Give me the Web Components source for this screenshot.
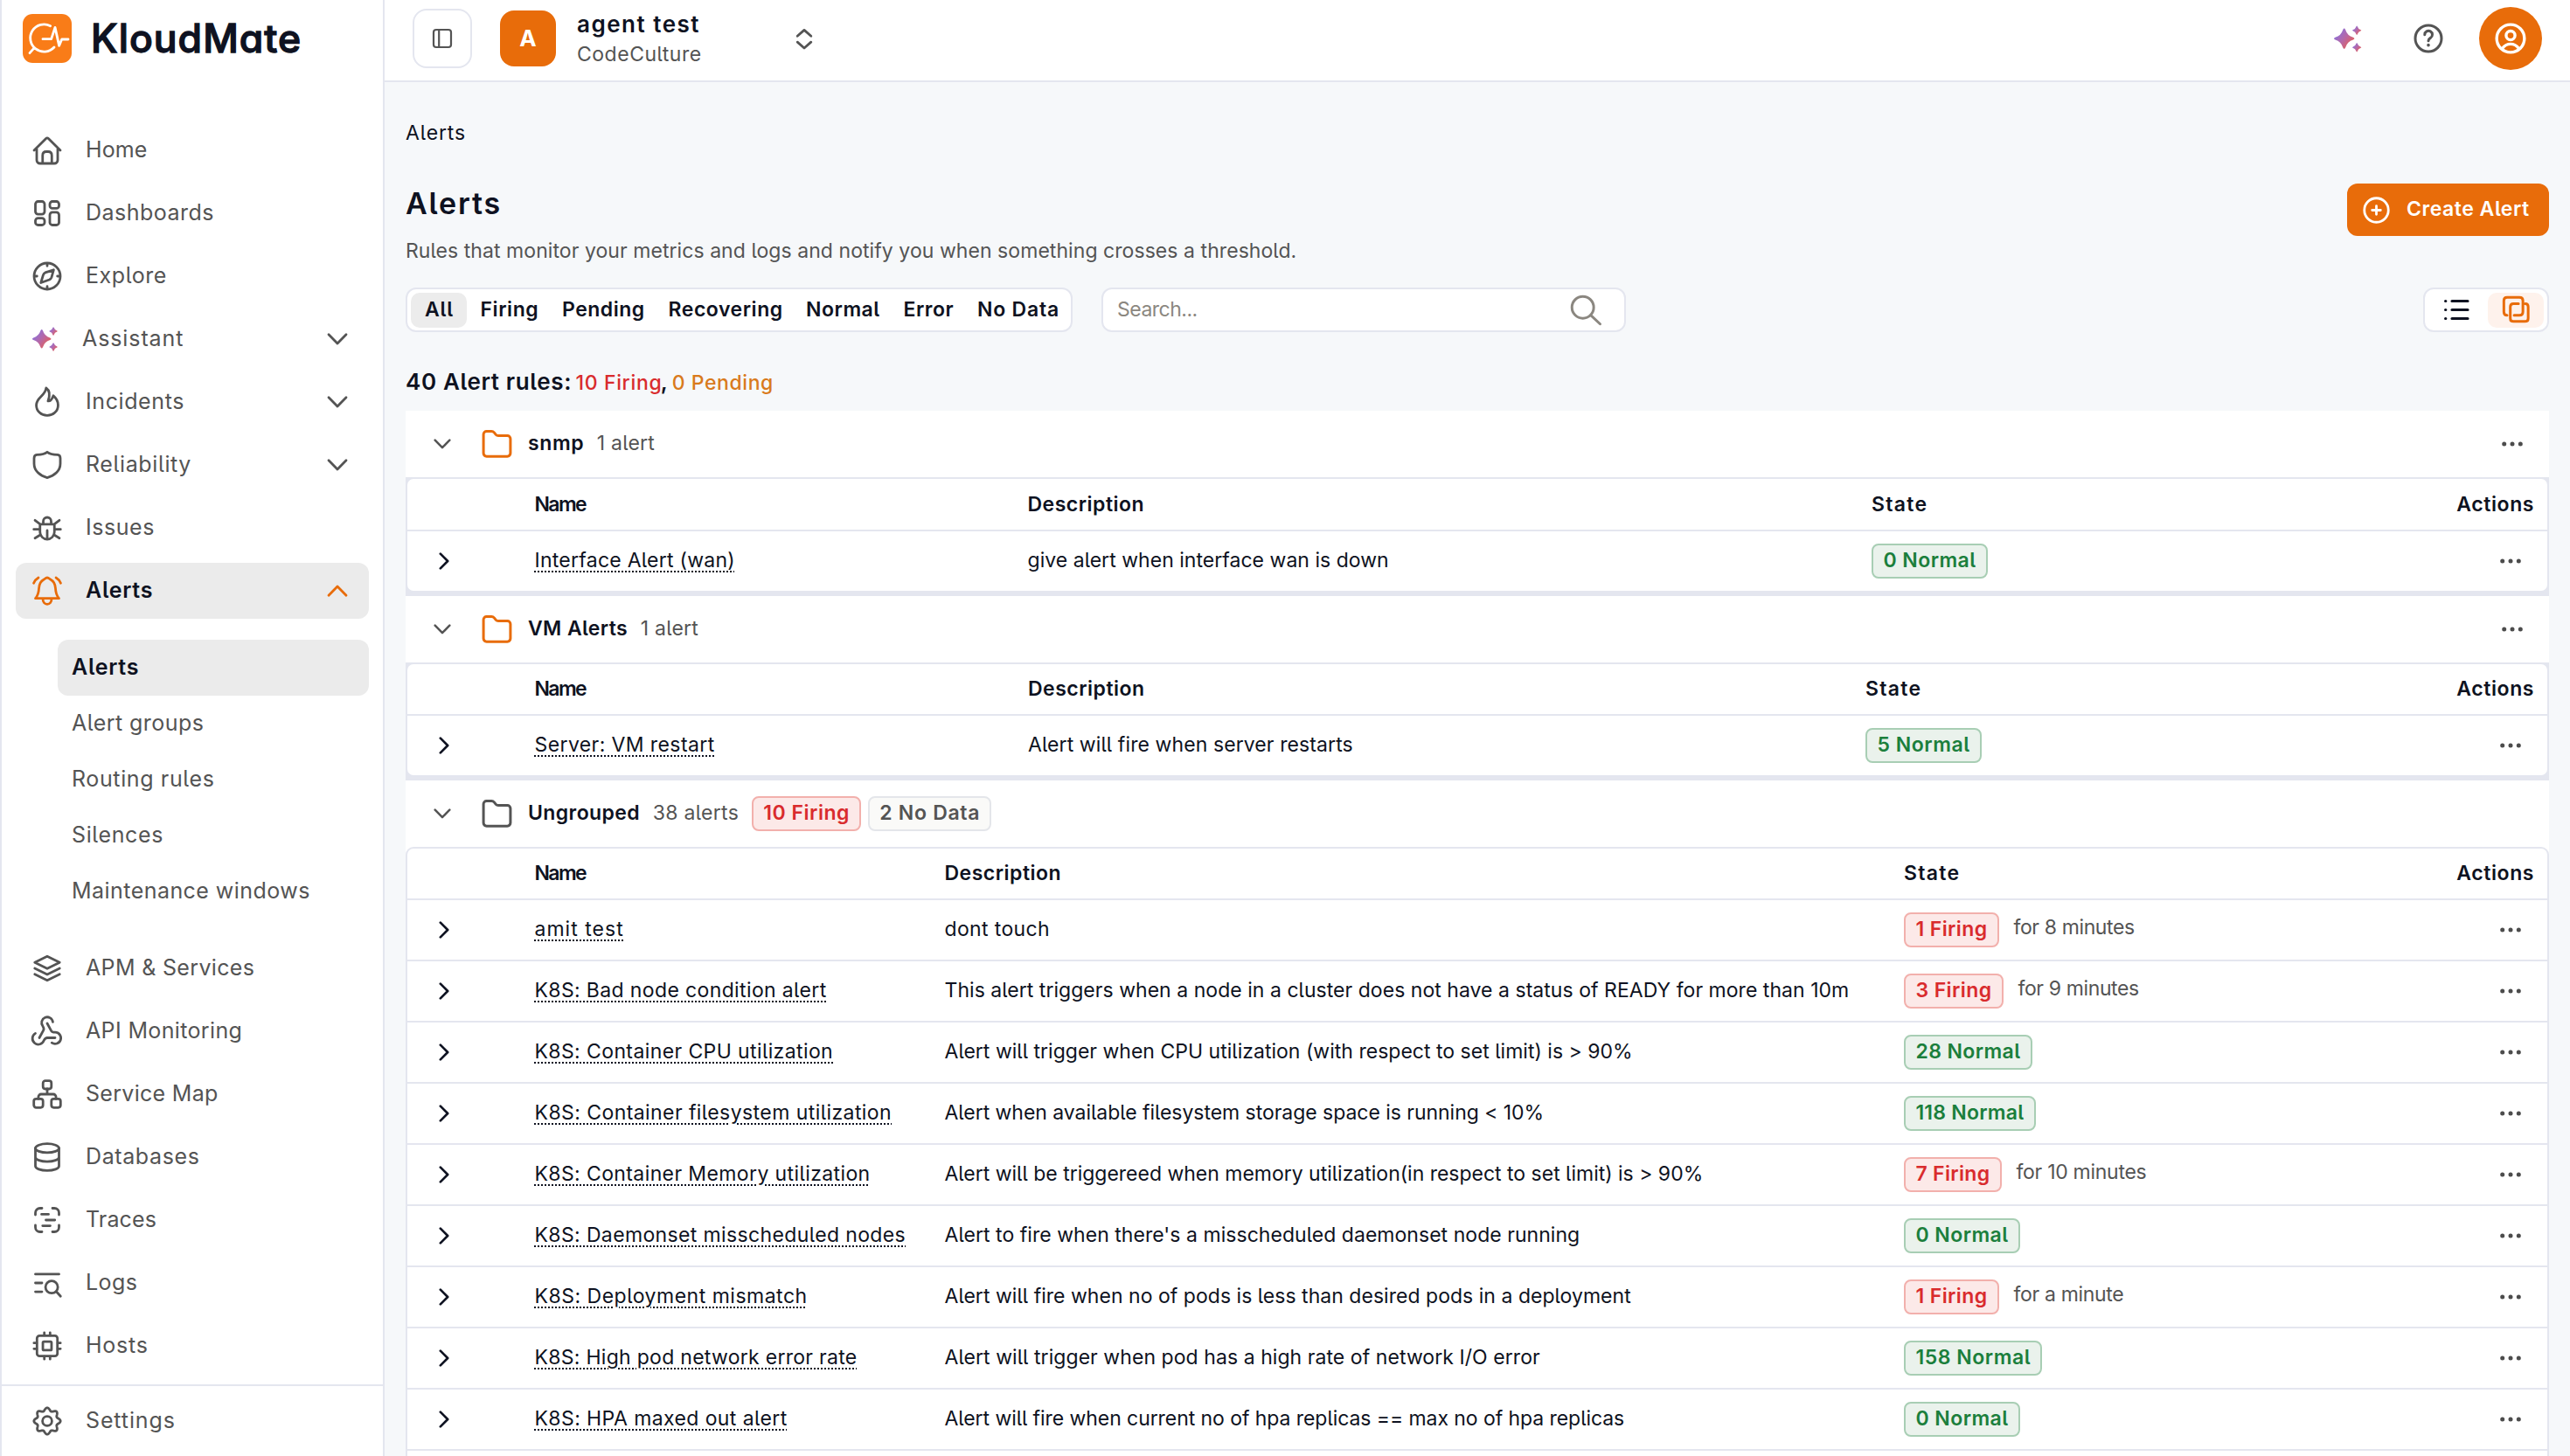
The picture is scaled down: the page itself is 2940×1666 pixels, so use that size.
<!DOCTYPE html>
<html lang="en">
<head>
<meta charset="utf-8">
<title>KloudMate – Alerts</title>
<style>
:root{--ink:#0e1221;--grey:#545454;--line:#e4e6ef;--orange:#e86c0a;--canvas:#f6f8fa;--red:#d92b2d;--green:#1b7f3c}
html,body{margin:0;height:1666px;overflow:hidden;background:var(--canvas)}
body{font-family:Inter,"Liberation Sans",sans-serif;font-feature-settings:"cv05" 1;color:var(--ink);font-size:23px;line-height:1.2;-webkit-font-smoothing:antialiased}
</style>
</head>
<body>
<km-app></km-app>
<script>
const gear = (() => {
  let d = '';
  for (let i = 0; i < 96; i++) {
    const a = i / 96 * Math.PI * 2, c = Math.cos(a * 8);
    const r = 9 + 1.15 * c;
    d += (i ? 'L' : 'M') + (12 + r * Math.sin(a)).toFixed(2) + ' ' + (12 - r * Math.cos(a)).toFixed(2);
  }
  return d + 'Z';
})();
const star = (x, y, r, id) => {
  const k = r * .3, m = r * .12;
  return `<path fill="url(#${id})" stroke="none" d="M${x - m} ${y - r + m}Q${x} ${y - r - m} ${x + m} ${y - r + m}Q${x + k} ${y - k} ${x + r - m} ${y - m}Q${x + r + m} ${y} ${x + r - m} ${y + m}Q${x + k} ${y + k} ${x + m} ${y + r - m}Q${x} ${y + r + m} ${x - m} ${y + r - m}Q${x - k} ${y + k} ${x - r + m} ${y + m}Q${x - r - m} ${y} ${x - r + m} ${y - m}Q${x - k} ${y - k} ${x - m} ${y - r + m}Z"/>`;
};
const ICONS = {
  home: '<path d="M2 12 10.9 3.1a1.6 1.6 0 0 1 2.2 0L22 12M4 11v8.5A2.5 2.5 0 0 0 6.500 22h11a2.500 2.500 0 0 0 2.500-2.500V11M8.500 22v-6c0-2 1-3 2.800-3h1.400c1.800 0 2.800 1 2.800 3v6"/>',
  dashboards: '<rect x="3" y="3" width="7" height="9.700" rx="2"/><rect x="14" y="3" width="7" height="5.300" rx="2"/><rect x="3" y="15.700" width="7" height="5.300" rx="2"/><rect x="14" y="11.300" width="7" height="9.700" rx="2"/>',
  explore: '<circle cx="12" cy="12" r="10"/><path d="M12 2.500v1.700M12 19.800v1.700M2.500 12h1.700M19.800 12h1.700M16.900 7.200 15.300 12.900Q14.900 14.100 13.700 14.700L7.200 17 8.900 11.200Q9.300 9.900 10.500 9.300Z"/>',
  assistant: '<defs><linearGradient id="g" x1="0.1" y1="0.2" x2="0.9" y2="0.85"><stop offset="0" stop-color="#8a72dc"/><stop offset=".5" stop-color="#b868a4"/><stop offset="1" stop-color="#e85f50"/></linearGradient></defs>' + star(7.8, 11.8, 7.2, 'g') + star(16.7, 6, 3.2, 'g') + star(16.7, 18, 3.2, 'g'),
  incidents: '<path d="M11.200 1.200C14.500 3.500 14 7.500 12.600 11.300 14.800 11.500 15.900 9.400 16.700 7.200 19.400 9.400 20.300 11.800 20.300 14.300 20.300 19 16.600 22.300 12 22.300S3.700 19 3.700 14.300C3.700 8.300 10.500 7.500 11.200 1.200Z"/>',
  reliability: '<path d="M12 2.200C10 4 6.600 4.200 4 4.300 2.400 4.400 2 5.200 2 7v4c0 5.500 4.500 9.300 10 10.700 5.500-1.400 10-5.200 10-10.700V7c0-1.800-.4-2.600-2-2.700C17.400 4.200 14 4 12 2.200Z"/>',
  issues: '<path d="M9 8.800V7a3 3 0 0 1 6 0v1.800M6.500 9.300h11v5.900a5.500 5.500 0 0 1-11 0ZM12 14v6.600M1.800 13.100h4.500M17.700 13.100h4.500M2.700 6.200 6.700 9.200M21.300 6.200 17.300 9.200M2.700 19.800 7 17.200M21.300 19.800 17 17.200"/>',
  bell: '<path d="M12 2c-1.300 0-1.700 1-2.700 1.500C6.500 5 5.900 7 5.700 10c-.2 3.600-.5 5.500-2.700 7.800h18c-2.200-2.300-2.500-4.200-2.700-7.800-.2-3-.8-5-3.600-6.500C13.700 3 13.300 2 12 2ZM8.700 18.300c0 2.300 1.300 3.900 3.300 3.900s3.300-1.600 3.300-3.900M5.300 2C3.600 3 2.500 4.300 1.700 6.200M18.700 2c1.700 1 2.800 2.300 3.600 4.200"/>',
  apm: '<path d="M12 2.800 21.500 7.500 12 12.200 2.500 7.500ZM2.500 12 12 16.700 21.500 12M2.500 16.500 12 21.200 21.500 16.500"/>',
  api: '<path d="M18 17h-6c-1.100 0-1.950.94-2.480 1.900A4.500 4.500 0 1 1 3 13.600M6 17l3.130-5.780c.53-.97.1-2.180-.5-3.100A4.300 4.300 0 1 1 16.300 4.900M12 6l3.130 5.730C15.660 12.700 16.900 12.800 18 12.800a4.400 4.400 0 1 1-2.500 8"/>',
  map: '<rect x="8.800" y="1.800" width="6.400" height="6.200" rx="1.800"/><rect x="1.800" y="15.600" width="7" height="6.600" rx="1.800"/><rect x="15.200" y="15.600" width="7" height="6.600" rx="1.800"/><path d="M12 8v4M5.300 15.500V14a2 2 0 0 1 2-2h9.400a2 2 0 0 1 2 2v1.500"/>',
  databases: '<ellipse cx="12" cy="5.200" rx="9" ry="3.400"/><path d="M3 5.200v13.600c0 1.900 4 3.400 9 3.400s9-1.500 9-3.400V5.200M3 12c0 1.900 4 3.400 9 3.400s9-1.500 9-3.400"/>',
  traces: '<path d="M3 8V6.500A3.500 3.500 0 0 1 6.500 3H8M16 3h1.500A3.500 3.500 0 0 1 21 6.500V8M21 16v1.500a3.500 3.500 0 0 1-3.500 3.500H16M8 21H6.500A3.500 3.500 0 0 1 3 17.500V16M7.700 7.600h5.300M11 12h6.800M8.500 16.400h5.800"/>',
  logs: '<path d="M3 5.300h18M3 12h5M3 18.700h5M18.900 18.500 22.200 22.200"/><circle cx="15.400" cy="15.100" r="4.700"/>',
  hosts: '<rect x="4.200" y="4.200" width="15.600" height="15.600" rx="2"/><rect x="8.700" y="8.700" width="6.600" height="6.600" rx=".8"/><path d="M9.800 1.900v2M14.200 1.900v2M9.800 20.100v2M14.200 20.100v2M1.900 9.800h2M1.900 14.200h2M20.100 9.800h2M20.100 14.200h2"/>',
  settings: `<path d="${gear}"/><circle cx="12" cy="12" r="3.600"/>`,
  help: '<circle cx="12" cy="12" r="10"/><path d="M9.200 9.100a2.900 2.900 0 1 1 4.400 2.500c-1 .6-1.600 1.100-1.600 2.200"/><circle cx="12" cy="17.100" r=".6" fill="currentColor" stroke-width="1.200"/>',
  user: '<circle cx="12" cy="12" r="10"/><circle cx="12" cy="9.800" r="3.200"/><path d="M6 19.200c1.500-2 3.500-3.200 6-3.200s4.500 1.200 6 3.200"/>',
  plus: '<circle cx="12" cy="12" r="10"/><path d="M12 8.500v7M8.500 12h7"/>',
  search: '<circle cx="9.800" cy="9.800" r="8.300"/><path d="M15.800 15.800 23 22.500"/>',
  down: '<path d="M2 6.800 12 17 22 6.800"/>',
  up: '<path d="M2 17.200 12 7 22 17.200"/>',
  right: '<path d="M7 2 17 12 7 22"/>',
  folder: '<path d="M2 19.200V5.200A2.300 2.300 0 0 1 4.300 2.900H8c.8 0 1.400.3 1.900.9l1.300 1.600c.5.6 1 .8 1.800.8h6.700A2.300 2.300 0 0 1 22 8.500v10.700a2.300 2.300 0 0 1-2.300 2.300H4.300A2.300 2.300 0 0 1 2 19.200Z"/>',
  panel: '<rect x="2" y="2" width="20" height="20" rx="3"/><path d="M8.200 2v20"/>',
  sort: '<path d="M3.500 9 12 1.500 20.500 9M3.500 16.500 12 24 20.500 16.500"/>',
  dots: '<g fill="currentColor" stroke="none"><circle cx="2.700" cy="12" r="2.500"/><circle cx="12" cy="12" r="2.500"/><circle cx="21.300" cy="12" r="2.500"/></g>',
  list: '<path d="M9 4.500h18M9 14.500h18M9 24.500h18M1.600 4.500h.2M1.600 14.500h.2M1.600 24.500h.2"/>',
  layers: '<path d="M15 65C7 65 4 60 4 53V15C4 7 8 4 15 4H57C65 4 69 8 69 15V53C69 61 65 65 57 65H39M54 25H37C29 25 26 29 26 36V75C26 82 29 86 37 86H76C84 86 87 82 87 75V36C87 29 84 25 77 25"/>'
};

/* Base class: renders its template into an open shadow root. */
class KmElement extends HTMLElement {
  connectedCallback() {
    if (this.shadowRoot) return;
    this.attachShadow({ mode: 'open' }).innerHTML = `<style>${this.css()}</style>${this.html()}`;
  }
  attr(n, f = '') { return this.getAttribute(n) ?? f; }
  css() { return ''; }
  html() { return '<slot></slot>'; }
}

/* Stroke icon; size in px, stroke in px. */
customElements.define('km-icon', class extends KmElement {
  css() { const s = this.attr('size', 36); return `:host{display:block;flex:none;width:${s}px;height:${s}px}svg{display:block;width:100%;height:100%;overflow:visible}`; }
  html() {
    const box = this.attr('box', 24), k = box / this.attr('size', 36);
    return `<svg viewBox="0 0 ${box} ${box}" fill="none" stroke="currentColor" stroke-width="${this.attr('stroke', 2.8) * k}" stroke-linecap="round" stroke-linejoin="round">${ICONS[this.attr('name')]}</svg>`;
  }
});

/* Single-line label whose tracking is adjusted so its glyphs span the given width. */
customElements.define('km-text', class extends KmElement {
  css() { return ':host{display:inline-block;white-space:nowrap;flex:none;justify-self:start}'; }
  html() { return '<span><slot></slot></span>'; }
  connectedCallback() {
    super.connectedCallback();
    queueMicrotask(() => {
      const w = parseFloat(this.attr('w', '0'));
      if (!w) return;
      const run = this.shadowRoot.querySelector('span');
      const n = this.textContent.length, em = parseFloat(getComputedStyle(this).fontSize);
      this.style.letterSpacing = '0px';
      const step = (w + em * .095 - run.getBoundingClientRect().width) / (n - 1);
      this.style.letterSpacing = step.toFixed(3) + 'px';
      run.style.marginRight = (-step).toFixed(3) + 'px';
    });
  }
});

customElements.define('km-logo', class extends KmElement {
  css() { return `:host{display:flex;align-items:center;gap:22px;height:56px;padding:16px 0 0 24px}
    svg{width:56px;height:56px;display:block}
    .word{font-size:44.500px;font-weight:500;font-feature-settings:"cv11" 1,"cv05" 0;line-height:56px;-webkit-text-stroke:1.300px var(--ink);stroke-linejoin:round}`; }
  html() { return `<svg viewBox="0 0 168 168"><rect width="168" height="168" rx="34" fill="#f97c18"/><g fill="none" stroke="#fff" stroke-width="8.500" stroke-linecap="round" stroke-linejoin="round"><path d="M95 41A47 47 0 1 0 108 114M40 116 24 134M69 86H98L111 46 125 109 134 87H156"/></g></svg><km-text class="word" w="236">KloudMate</km-text>`; }
});

customElements.define('km-nav-item', class extends KmElement {
  css() { const on = this.hasAttribute('active'), ai = this.attr('icon') === 'assistant', sub = this.hasAttribute('sub');
    return `:host{display:flex;align-items:center;height:64px;box-sizing:border-box;border-radius:12px;color:${on ? 'var(--ink)' : 'var(--grey)'};font-size:25px;font-weight:${on ? 600 : 430};${on ? 'background:#ebebeb;' : ''}
      margin-left:${sub ? 48 : 0}px;padding:0 24px 0 ${sub ? 16 : 18}px}
    km-icon{color:${on ? 'var(--orange)' : 'inherit'}}
    km-text{padding-bottom:2px;margin-left:${sub ? 0 : ai ? 22 : 26}px}
    .arrow{margin-left:auto}`; }
  html() {
    const i = this.attr('icon'), a = this.attr('arrow');
    return `${i ? `<km-icon name="${i}" stroke="2.800"></km-icon>` : ''}<km-text w="${this.attr('w')}">${this.textContent}</km-text>${a ? `<km-icon class="arrow" name="${a}" size="24" stroke="2.800"></km-icon>` : ''}`;
  }
});

customElements.define('km-sidebar', class extends KmElement {
  css() { return `:host{display:flex;flex-direction:column;box-sizing:border-box;width:440px;flex:none;height:1666px;background:#fff;border-left:2px solid var(--line);border-right:2px solid var(--line)}
    nav{display:flex;flex-direction:column;gap:8px;padding:68px 16px 0 16px;flex:1;min-height:0}
    .sub{display:flex;flex-direction:column;padding:16px 0}
    footer{border-top:2px solid var(--line);height:82px;box-sizing:border-box;padding:8px 16px 0}`; }
  html() {
    const it = (i, w, t, x = '') => `<km-nav-item icon="${i}" w="${w}" ${x}>${t}</km-nav-item>`;
    const su = (w, t, x = '') => `<km-nav-item sub w="${w}" ${x}>${t}</km-nav-item>`;
    return `<km-logo></km-logo><nav>
      ${it('home', 68, 'Home')}${it('dashboards', 144, 'Dashboards')}${it('explore', 90, 'Explore')}
      ${it('assistant', 113, 'Assistant', 'arrow="down"')}${it('incidents', 110, 'Incidents', 'arrow="down"')}${it('reliability', 118, 'Reliability', 'arrow="down"')}
      ${it('issues', 76, 'Issues')}${it('bell', 74, 'Alerts', 'active arrow="up"')}
      <div class="sub">${su(74, 'Alerts', 'active')}${su(148.5, 'Alert groups')}${su(160.5, 'Routing rules')}${su(102, 'Silences')}${su(270, 'Maintenance windows')}</div>
      ${it('apm', 190.5, 'APM &amp; Services')}${it('api', 176.5, 'API Monitoring')}${it('map', 149, 'Service Map')}${it('databases', 127.5, 'Databases')}
      ${it('traces', 78.5, 'Traces')}${it('logs', 56.5, 'Logs')}${it('hosts', 68.5, 'Hosts')}</nav>
      <footer>${it('settings', 99.5, 'Settings')}</footer>`;
  }
});

customElements.define('km-topbar', class extends KmElement {
  css() { return `:host{display:flex;flex:none;align-items:center;box-sizing:border-box;height:94px;padding:0 32px 4px 32px;background:#fff;border-bottom:2px solid var(--line)}
    .toggle{width:68px;height:68px;box-sizing:border-box;border:2px solid var(--line);border-radius:16px;display:grid;place-items:center;color:var(--grey)}
    .org{width:64px;height:64px;border-radius:16px;background:var(--orange);color:#fff;display:grid;place-items:center;font-size:26px;font-weight:700;margin-left:32px}
    .names{margin-left:24px;display:flex;flex-direction:column;width:249px;padding-top:1px}
    .names km-text{line-height:34px}.a{font-size:26px;font-weight:600;height:34px}.b{color:var(--grey)}
    .grey{color:var(--grey)}.right{margin-left:auto;display:flex;align-items:center}
    .me{width:72px;height:72px;border-radius:50%;background:var(--orange);color:#fff;display:grid;place-items:center;margin-left:40px}`; }
  html() { return `<div class="toggle"><km-icon name="panel" size="24" stroke="2.200"></km-icon></div><div class="org">A</div>
    <div class="names"><km-text class="a" w="137">agent test</km-text><km-text class="b" w="140">CodeCulture</km-text></div>
    <km-icon class="grey" name="sort" size="22" stroke="2.800"></km-icon>
    <div class="right"><km-icon name="assistant" size="39"></km-icon><km-icon class="grey" name="help" size="36" stroke="3" style="margin-left:52px"></km-icon>
    <div class="me"><km-icon name="user" size="38" stroke="3.400"></km-icon></div></div>`; }
});

customElements.define('km-badge', class extends KmElement {
  css() {
    const c = { firing: ['#fce9e8', '#f2b0ac', 'var(--red)'], normal: ['#eaf2ec', '#a8ceb4', 'var(--green)'], nodata: ['#fafaf8', '#e4e6ea', '#545454'] }[this.attr('kind')];
    return `:host{display:inline-flex;align-items:center;justify-content:center;flex:none;box-sizing:border-box;height:40px;width:${this.attr('box')}px;border:2px solid ${c[1]};border-radius:8px;background:${c[0]};color:${c[2]};font-weight:600;font-size:23px}`;
  }
  html() { return `<km-text w="${this.attr('box') - 29}">${this.textContent}</km-text>`; }
});

customElements.define('km-filters', class extends KmElement {
  css() { return `:host{display:flex;align-items:center;box-sizing:border-box;width:763px;height:51px;border:2px solid var(--line);border-radius:12px;background:#fff;padding-left:4px;font-weight:600}
    span{display:flex;align-items:center;height:40px;border-radius:10px;flex:none}
    .item{padding-left:14.500px;width:var(--w)}.on{background:#ececec;width:64px;justify-content:center;margin-right:1px}`; }
  html() { return [['All', 30, 0], ['Firing', 64, 79], ['Pending', 92, 107], ['Recovering', 128.500, 143], ['Normal', 82, 97], ['Error', 55, 70], ['No Data', 91, 92]]
    .map(([t, w, a], i) => `<span class="${i ? 'item' : 'on'}" style="--w:${a}px"><km-text w="${w}">${t}</km-text></span>`).join(''); }
});

customElements.define('km-search', class extends KmElement {
  css() { return `:host{display:flex;align-items:center;justify-content:space-between;box-sizing:border-box;width:600px;height:51px;border:2px solid var(--line);border-radius:12px;background:#fff;padding:0 26px 0 16px;color:#8b8780}`; }
  html() { return `<km-text w="90">Search...</km-text><km-icon name="search" size="36" box="24" stroke="3"></km-icon>`; }
});

customElements.define('km-view-toggle', class extends KmElement {
  css() { return `:host{display:flex;align-items:center;justify-content:space-between;box-sizing:border-box;width:144px;height:51px;border:2px solid var(--line);border-radius:12px;background:#fff;padding:0 4px 0 22px}
    .on{width:64px;height:40px;border-radius:10px;background:#fef2ec;color:var(--orange);display:grid;place-items:center}`; }
  html() { return `<km-icon name="list" size="29" box="29" stroke="3.200"></km-icon><div class="on"><km-icon name="layers" size="30.500" box="91" stroke="3"></km-icon></div>`; }
});

customElements.define('km-page-head', class extends KmElement {
  css() { return `:host{display:flex;flex-direction:column}
    .crumb{height:28px;line-height:28px;margin-top:44px;font-weight:430}
    .row{display:flex;justify-content:space-between;margin-top:44px;height:92px}
    .titles{display:flex;flex-direction:column}
    .h{font-size:34px;font-weight:600;line-height:46px}.d{color:var(--grey);line-height:28px;margin-top:17px}
    .btn{display:flex;align-items:center;box-sizing:border-box;width:231px;height:60px;border-radius:12px;background:var(--orange);color:#fff;font-weight:600;padding:0 0 0 17px;gap:18px}
    .tools{display:flex;margin-top:27px}.tools km-search{margin-left:33px}.tools km-view-toggle{margin-left:auto}
    .sum{display:flex;align-items:baseline;font-weight:600;height:32px;margin-top:41px;line-height:32px;font-size:26px}
    .sum .s{font-size:23px;font-weight:500}`; }
  html() { return `<div class="crumb"><km-text w="66">Alerts</km-text></div>
    <div class="row"><div class="titles"><km-text class="h" w="105">Alerts</km-text><km-text class="d" w="1017">Rules that monitor your metrics and logs and notify you when something crosses a threshold.</km-text></div>
    <div class="btn"><km-icon name="plus" size="33" stroke="2.800"></km-icon><km-text w="138">Create Alert</km-text></div></div>
    <div class="tools"><km-filters></km-filters><km-search></km-search><km-view-toggle></km-view-toggle></div>
    <div class="sum"><km-text w="187">40 Alert rules:</km-text><km-text class="s" w="96" style="color:var(--red);padding-left:5px">10 Firing</km-text><km-text style="margin-left:-1px;font-size:25px;width:13px">,</km-text><km-text class="s" w="113.500" style="color:#d97a1c">0 Pending</km-text></div>`; }
});

/* One rule in a group's table. */
customElements.define('km-rule', class extends KmElement {
  css() { return `:host{display:grid;grid-template-columns:var(--cols);align-items:center;height:68px;border-bottom:2px solid var(--line)}
    :host([last]){border-bottom:0}
    .go{margin-left:32px}.name{font-weight:430;text-decoration:underline dotted 2px;text-underline-offset:4px}
    .state{display:flex;align-items:center;gap:17px}.since{color:var(--grey);padding-bottom:5px}
    .more{justify-self:end;margin-right:30px;color:#4c4c4c}`; }
  html() { const [n, nw, d, dw, k, b, bw, s, sw] = this.data;
    return `<km-icon class="go" name="right" size="20" stroke="2.700"></km-icon><km-text class="name" w="${nw}">${n}</km-text><km-text class="desc" w="${dw}">${d}</km-text>
    <div class="state"><km-badge kind="${k}" box="${bw}">${b}</km-badge>${s ? `<km-text class="since" w="${sw}">${s}</km-text>` : ''}</div><km-icon class="more" name="dots" size="24"></km-icon>`; }
});

customElements.define('km-group', class extends KmElement {
  css() { const c = this.data;
    return `:host{display:block;background:#fff;--cols:145.500px ${c.desc - 611}px ${c.state - c.desc - .5}px 1fr 120px}
    header{display:flex;align-items:center;height:76px;padding-left:32px}
    .car{color:var(--grey)}.fold{margin:-2px 0 0 34px;color:${c.plain ? 'var(--grey)' : 'var(--orange)'}}
    .t{font-weight:600;margin-left:17px}.c{color:var(--grey);margin-left:15px}
    km-badge{margin-left:8px}.first{margin-left:15px}.more{margin:0 30px 0 auto;color:#4c4c4c}
    .table{border:2px solid var(--line);border-radius:9px;background:#fff}
    .head{display:grid;grid-template-columns:var(--cols);align-items:center;height:${c.headH}px;border-bottom:2px solid var(--line);font-weight:600}
    .head km-text{padding-top:1px}.act{justify-self:end;padding-right:15.500px}
    .foot{background:var(--line);padding-bottom:4px}`; }
  html() { const c = this.data;
    return `<header><km-icon class="car" name="down" size="20" stroke="2.500"></km-icon><km-icon class="fold" name="folder" size="37" stroke="3"></km-icon>
      <km-text class="t" w="${c.w}">${c.name}</km-text><km-text class="c" w="${c.cw}">${c.count}</km-text>
      ${c.plain ? '<km-badge class="first" kind="firing" box="125">10 Firing</km-badge><km-badge kind="nodata" box="141">2 No Data</km-badge>' : '<km-icon class="more" name="dots" size="24"></km-icon>'}</header>
      <div class="${c.plain ? '' : 'foot'}"><div class="table"><div class="head"><span></span><km-text w="58">Name</km-text><km-text w="131">Description</km-text><km-text w="61">State</km-text><km-text class="act" w="86">Actions</km-text></div><div class="rows"></div></div></div>`; }
  connectedCallback() {
    super.connectedCallback();
    const rows = this.shadowRoot.querySelector('.rows');
    if (rows.children.length) return;
    this.data.rules.forEach((r, i, all) => { const e = document.createElement('km-rule'); e.data = r; if (!this.data.plain && i === all.length - 1) e.setAttribute('last', ''); rows.append(e); });
    if (this.data.plain) { const t = document.createElement('div'); t.style.height = '20px'; rows.append(t); }
  }
});

const GROUPS = [
  { name: 'snmp', w: 61.5, count: '1 alert', cw: 64, desc: 1175, state: 2141, headH: 58, rules: [
    ['Interface Alert (wan)', 227, 'give alert when interface wan is down', 411, 'normal', '0 Normal', 132.5]] },
  { name: 'VM Alerts', w: 111.5, count: '1 alert', cw: 64, desc: 1175.5, state: 2134, headH: 57, rules: [
    ['Server: VM restart', 203.5, 'Alert will fire when server restarts', 369.5, 'normal', '5 Normal', 132.5]] },
  { name: 'Ungrouped', w: 125.5, count: '38 alerts', cw: 96, desc: 1080, state: 2178, headH: 57, plain: true, rules: [
    ['amit test', 99, 'dont touch', 118, 'firing', '1 Firing', 108.5, 'for 8 minutes', 136.5],
    ['K8S: Bad node condition alert', 331.5, 'This alert triggers when a node in a cluster does not have a status of READY for more than 10m', 1032.5, 'firing', '3 Firing', 113.5, 'for 9 minutes', 136.5],
    ['K8S: Container CPU utilization', 339, 'Alert will trigger when CPU utilization (with respect to set limit) is &gt; 90%', 785, 'normal', '28 Normal', 146.5],
    ['K8S: Container filesystem utilization', 406, 'Alert when available filesystem storage space is running &lt; 10%', 683.5, 'normal', '118 Normal', 150.5],
    ['K8S: Container Memory utilization', 381.5, 'Alert will be triggereed when memory utilization(in respect to set limit) is &gt; 90%', 865.5, 'firing', '7 Firing', 111.5, 'for 10 minutes', 147],
    ['K8S: Daemonset misscheduled nodes', 422, "Alert to fire when there's a misscheduled daemonset node running", 724.5, 'normal', '0 Normal', 132.5],
    ['K8S: Deployment mismatch', 309.5, 'Alert will fire when no of pods is less than desired pods in a deployment', 783, 'firing', '1 Firing', 108.5, 'for a minute', 124],
    ['K8S: High pod network error rate', 366.5, 'Alert will trigger when pod has a high rate of network I/O error', 679, 'normal', '158 Normal', 158],
    ['K8S: HPA maxed out alert', 286.5, 'Alert will fire when current no of hpa replicas == max no of hpa replicas', 775.5, 'normal', '0 Normal', 132.5]] }
];

customElements.define('km-app', class extends KmElement {
  css() { return `:host{display:flex;width:2940px;height:1666px;overflow:hidden;background:var(--canvas)}
    .page{flex:1;min-width:0;display:flex;flex-direction:column}
    main{flex:none;padding:0 24px;display:flex;flex-direction:column}.groups{margin-top:17px}`; }
  html() { return `<km-sidebar></km-sidebar><div class="page"><km-topbar></km-topbar><main><km-page-head></km-page-head><div class="groups"></div></main></div>`; }
  connectedCallback() {
    super.connectedCallback();
    const box = this.shadowRoot.querySelector('.groups');
    for (const g of GROUPS) { const e = document.createElement('km-group'); e.data = g; box.append(e); }
  }
});
</script>
</body>
</html>
